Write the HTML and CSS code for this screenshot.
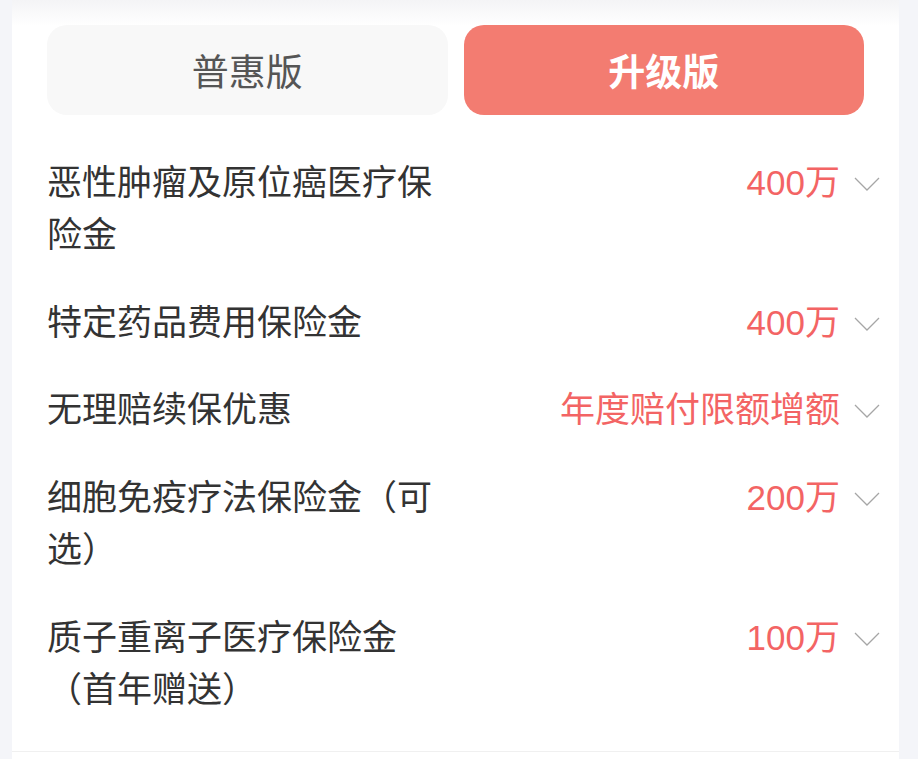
FILE: index.html
```html
<!DOCTYPE html>
<html lang="zh-CN">

<head>
    <meta charset="utf-8">
    <meta name="viewport" content="width=device-width, initial-scale=1.0">
    <title>保障方案</title>
    <link rel="stylesheet" href="styles.css">
</head>

<body>
    <section class="kort">
        <nav class="faner">
            <button class="fane">普惠版</button>
            <button class="fane valgt">升级版</button>
        </nav>

        <ul class="liste">
            <li class="raekke">
                <span class="navn">恶性肿瘤及原位癌医疗保险金</span>
                <span class="vaerdi">400万</span>
                <svg class="pil" viewBox="0 0 26 14"><path d="M1 1 L13 13 L25 1" /></svg>
            </li>
            <li class="raekke">
                <span class="navn">特定药品费用保险金</span>
                <span class="vaerdi">400万</span>
                <svg class="pil" viewBox="0 0 26 14"><path d="M1 1 L13 13 L25 1" /></svg>
            </li>
            <li class="raekke">
                <span class="navn">无理赔续保优惠</span>
                <span class="vaerdi">年度赔付限额增额</span>
                <svg class="pil" viewBox="0 0 26 14"><path d="M1 1 L13 13 L25 1" /></svg>
            </li>
            <li class="raekke">
                <span class="navn">细胞免疫疗法保险金（可选）</span>
                <span class="vaerdi">200万</span>
                <svg class="pil" viewBox="0 0 26 14"><path d="M1 1 L13 13 L25 1" /></svg>
            </li>
            <li class="raekke">
                <span class="navn">质子重离子医疗保险金（首年赠送）</span>
                <span class="vaerdi">100万</span>
                <svg class="pil" viewBox="0 0 26 14"><path d="M1 1 L13 13 L25 1" /></svg>
            </li>
        </ul>
    </section>
</body></html>
```

FILE: styles.css
```css
* {
    margin: 0;
    padding: 0;
    box-sizing: border-box;
}

body {
    background-color: #f4f5f9;
    font-family: "Liberation Sans", "Noto Sans CJK SC", sans-serif;
    overflow: hidden;
}

.kort {
    width: 887px;
    min-height: 100vh;
    margin-left: 12px;
    background: linear-gradient(#f4f4f6, #ffffff 26px);
    padding-top: 25px;
}

.faner {
    display: flex;
    gap: 16px;
    padding: 0 35px;
    margin-bottom: 24px;
}

.fane {
    flex: 1;
    height: 90px;
    border: none;
    border-radius: 20px;
    background-color: #f8f8f8;
    color: #555555;
    font-family: "Noto Sans CJK SC", sans-serif;
    font-size: 37px;
}

.valgt {
    background-color: #f37c71;
    color: #ffffff;
    font-weight: bold;
}

.liste {
    list-style: none;
    padding: 0 19px 17px 35px;
    border-bottom: 1px solid #f0f0f0;
}

.raekke {
    display: flex;
    align-items: flex-start;
    padding: 17.5px 0;
    font-size: 35px;
    line-height: 52.5px;
}

.navn {
    width: 405px;
    color: #333333;
}

.vaerdi {
    flex: 1;
    text-align: right;
    color: #f36464;
}

.pil {
    width: 26px;
    height: 14px;
    margin: 20px 0 0 14px;
    fill: none;
    stroke: #a6a6a6;
    stroke-width: 1.3;
}
```
